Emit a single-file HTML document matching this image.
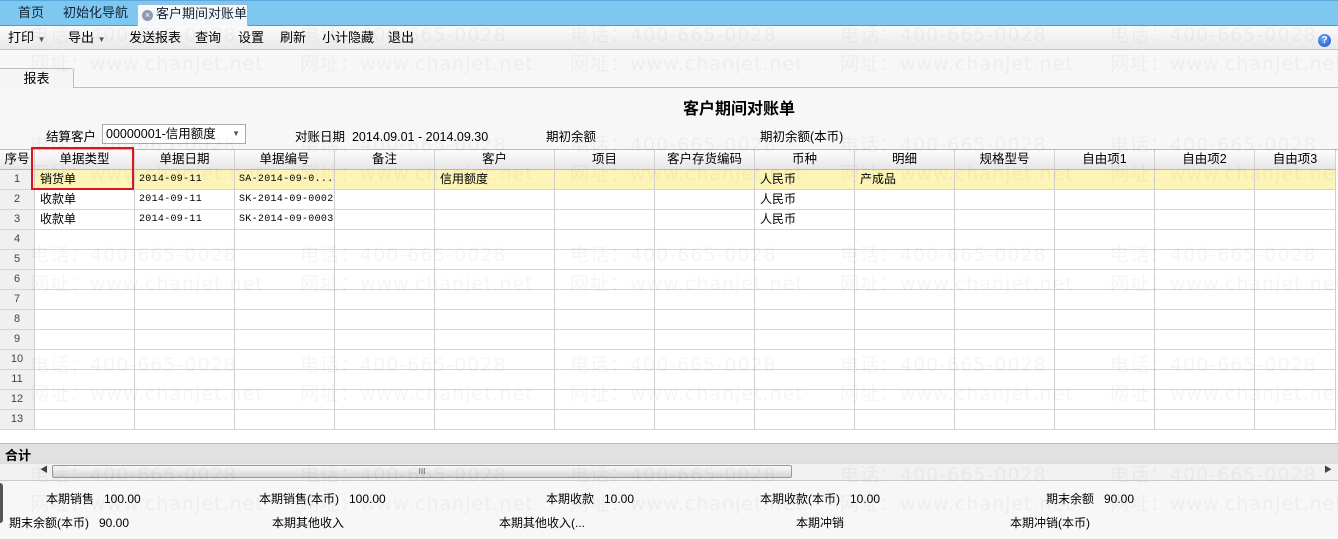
<!DOCTYPE html>
<html><head><meta charset="utf-8"><style>
*{margin:0;padding:0;box-sizing:border-box}
body{width:1338px;height:539px;overflow:hidden;background:#f7f7f7;font-family:"Liberation Sans","Noto Sans CJK SC",sans-serif;font-size:12px;color:#000;position:relative}
.a{position:absolute;white-space:nowrap}
.tabbar{left:0;top:0;width:1338px;height:26px;background:#7ec7f1;border-top:1px solid #5aa9dc;border-bottom:1px solid #4d9bd0}
.tb{top:0;height:26px;line-height:26px;font-size:13px;color:#123}
.toolbar{left:0;top:26px;width:1338px;height:24px;background:linear-gradient(#fbfbfb,#e9e9e9);border-bottom:1px solid #c8c8c8}
.tool{top:26px;line-height:24px;font-size:13px}
.c{position:absolute;border-right:1px solid #d0d0d0;border-bottom:1px solid #d6d6d6;height:20px;line-height:19px;padding-left:5px;overflow:hidden;font-size:12px;white-space:nowrap}
.h{background:linear-gradient(#fdfdfd,#e6e6e6);text-align:center;padding:0;font-size:12.5px;border-bottom:1px solid #bbb}
.mono{font-family:"Liberation Mono","Noto Sans CJK SC",monospace;font-size:10px;padding-left:4px;letter-spacing:0.3px}
.num{background:#f0f0f0;text-align:center;padding:0;color:#444;font-size:11px}
.wm{position:absolute;color:rgba(0,0,0,0.04);font-size:19px;white-space:nowrap;pointer-events:none;font-family:"DejaVu Sans","Noto Sans CJK SC",sans-serif;letter-spacing:1px}
</style></head><body>
<div class="a tabbar"></div>
<div class="a tb" style="left:18px">首页</div>
<div class="a tb" style="left:63px">初始化导航</div>
<div class="a" style="left:137px;top:4px;width:111px;height:23px;background:#f5f8fb;border:1px solid #9bbcd6;border-bottom:none;border-radius:2px 2px 0 0"></div>
<div class="a" style="left:142px;top:10px;width:11px;height:11px;border-radius:50%;background:#8a9bb0;color:#fff;font-size:9px;line-height:11px;text-align:center">×</div>
<div class="a tb" style="left:156px;top:1px">客户期间对账单</div>
<div class="a toolbar"></div>
<div class="a tool" style="left:8px">打印 <span style="font-size:8px;color:#555">▼</span></div>
<div class="a tool" style="left:68px">导出 <span style="font-size:8px;color:#555">▼</span></div>
<div class="a tool" style="left:129px">发送报表</div>
<div class="a tool" style="left:195px">查询</div>
<div class="a tool" style="left:238px">设置</div>
<div class="a tool" style="left:280px">刷新</div>
<div class="a tool" style="left:322px">小计隐藏</div>
<div class="a tool" style="left:388px">退出</div>
<div class="a" style="left:1318px;top:34px;width:13px;height:13px;border-radius:50%;background:radial-gradient(circle at 40% 35%,#6aa8ff,#1a4fc0);color:#fff;font-size:10px;font-weight:bold;line-height:13px;text-align:center">?</div>
<div class="a" style="left:0;top:87px;width:1338px;height:1px;background:#bdbdbd"></div>
<div class="a" style="left:0;top:68px;width:74px;height:20px;background:#f5f5f5;border:1px solid #bdbdbd;border-left:none;border-bottom:none;border-radius:0 3px 0 0;text-align:center;line-height:19px;font-size:13px">报表</div>
<div class="a" style="left:0;top:95px;width:1338px;text-align:center;font-size:16px;font-weight:bold;padding-left:140px">客户期间对账单</div>
<div class="a" style="left:46px;top:126px;font-size:12.5px">结算客户</div>
<div class="a" style="left:102px;top:124px;width:144px;height:20px;background:#fff;border:1px solid #aaa;font-size:12.5px;line-height:18px;padding-left:3px">00000001-信用额度<span style="position:absolute;right:5px;font-size:8px;color:#555">▼</span></div>
<div class="a" style="left:295px;top:126px;font-size:12.5px">对账日期&nbsp;&nbsp;2014.09.01 - 2014.09.30</div>
<div class="a" style="left:546px;top:126px;font-size:12.5px">期初余额</div>
<div class="a" style="left:760px;top:126px;font-size:12.5px">期初余额(本币)</div>
<div class="a" style="left:0;top:149px;width:1338px;height:314px;background:#fff;border-top:1px solid #bbb"></div>
<div id="g"></div>
<div class="a" style="left:0;top:443px;width:1338px;height:20px;background:#e1e1e1;border-top:1px solid #bbb"></div>
<div class="a" style="left:5px;top:445px;font-weight:bold;font-size:13px">合计</div>
<div class="a" style="left:0;top:463px;width:1338px;height:18px;background:#f2f2f2;border-top:1px solid #ddd;border-bottom:1px solid #ccc"></div>
<div class="a" style="left:40px;top:464px;font-size:8px;color:#444">◀</div>
<div class="a" style="left:52px;top:465px;width:740px;height:13px;background:linear-gradient(#fafafa,#d4d4d4);border:1px solid #999;border-radius:2px;text-align:center;font-size:8px;line-height:11px;color:#555">III</div>
<div class="a" style="left:1324px;top:464px;font-size:8px;color:#444">▶</div>
<div class="a" style="left:46px;top:490px">本期销售&nbsp;&nbsp;&nbsp;100.00</div>
<div class="a" style="left:259px;top:490px">本期销售(本币)&nbsp;&nbsp;&nbsp;100.00</div>
<div class="a" style="left:546px;top:490px">本期收款&nbsp;&nbsp;&nbsp;10.00</div>
<div class="a" style="left:760px;top:490px">本期收款(本币)&nbsp;&nbsp;&nbsp;10.00</div>
<div class="a" style="left:1046px;top:490px">期末余额&nbsp;&nbsp;&nbsp;90.00</div>
<div class="a" style="left:9px;top:514px">期末余额(本币)&nbsp;&nbsp;&nbsp;90.00</div>
<div class="a" style="left:272px;top:514px">本期其他收入</div>
<div class="a" style="left:499px;top:514px">本期其他收入(...</div>
<div class="a" style="left:796px;top:514px">本期冲销</div>
<div class="a" style="left:1010px;top:514px">本期冲销(本币)</div>
<div class="a" style="left:0;top:483px;width:3px;height:40px;background:#555;border-radius:0 3px 3px 0"></div>
<div class="a" style="left:31px;top:147px;width:103px;height:43px;border:2px solid #e0141b"></div>
<div id="w"></div>
<script>
var xs=[0,35,135,235,335,435,555,655,755,855,955,1055,1155,1255,1336];
var hd=["序号","单据类型","单据日期","单据编号","备注","客户","项目","客户存货编码","币种","明细","规格型号","自由项1","自由项2","自由项3"];
var rows=[["销货单","2014-09-11","SA-2014-09-0...","","信用额度","","","人民币","产成品"],["收款单","2014-09-11","SK-2014-09-0002","","","","","人民币",""],["收款单","2014-09-11","SK-2014-09-0003","","","","","人民币",""]];
var h="";
for(var i=0;i<14;i++){h+='<div class="c h" style="left:'+xs[i]+'px;top:150px;width:'+(xs[i+1]-xs[i])+'px">'+hd[i]+'</div>';}
for(var r=0;r<13;r++){var y=170+r*20;var bg=r==0?'#fdf5b8':'#fff';
for(var i=0;i<14;i++){var t='';var cls='c';
if(i==0){t=r+1;cls+=' num';}else{var d=rows[r];if(d&&i<=9)t=d[i-1];if(i==2||i==3)cls+=' mono';}
h+='<div class="'+cls+'" style="left:'+xs[i]+'px;top:'+y+'px;width:'+(xs[i+1]-xs[i])+'px;'+(i>0?'background:'+bg:'')+'">'+t+'</div>';}}
for(var i=1;i<14;i++)h+='<div class="a" style="left:'+(xs[i]-1)+'px;top:444px;width:1px;height:19px;background:#c4c4c4"></div>';
document.getElementById('g').innerHTML=h;
var w="";var xw=[30,300,570,840,1110];var yw=[20,130,240,350,460];
for(var a=0;a<5;a++)for(var b=0;b<5;b++){w+='<div class="wm" style="left:'+xw[b]+'px;top:'+yw[a]+'px">电话：400-665-0028</div><div class="wm" style="left:'+xw[b]+'px;top:'+(yw[a]+29)+'px">网址：www.chanjet.net</div>';}
document.getElementById('w').innerHTML=w;
</script>
</body></html>
